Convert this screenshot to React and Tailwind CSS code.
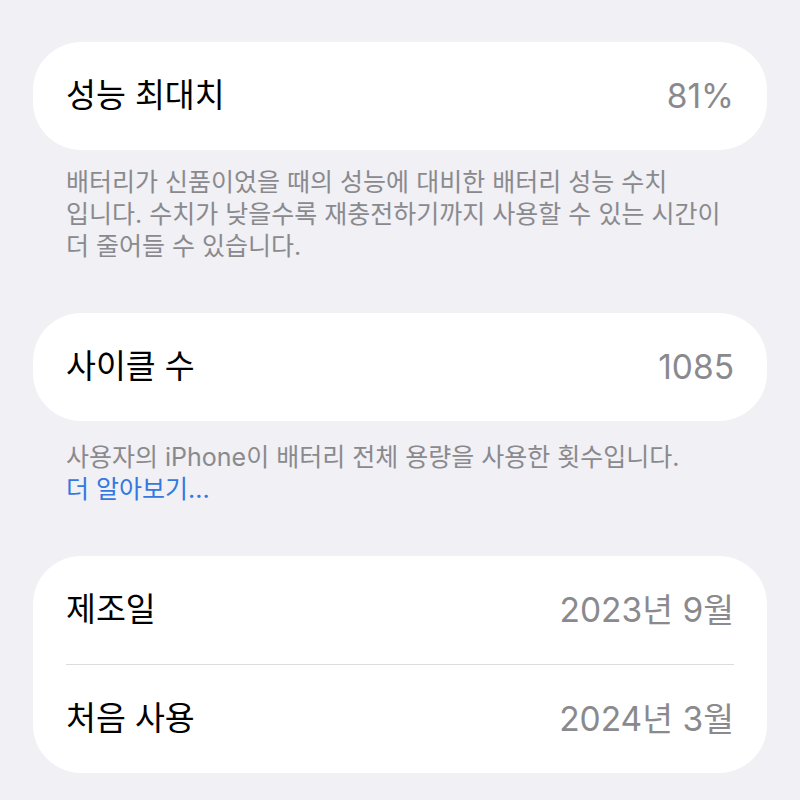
const rows = [
  { label: "제조일", value: "2023년 9월" },
  { label: "처음 사용", value: "2024년 3월" },
];

function Row({ label, value }) {
  return (
    <div className="h-[108px] flex items-center justify-between px-[33px]">
      <span className="text-[32.5px] text-black">{label}</span>
      <span className="text-[33.5px] text-[#8a8a8e]">{value}</span>
    </div>
  );
}

export default function App() {
  return (
    <div
      className="w-[800px] h-[800px] bg-[#f0f0f5] overflow-hidden pt-[42px] px-[33px]"
      style={{ fontFamily: 'Inter, "Noto Sans CJK KR", sans-serif' }}
    >
      <div className="bg-white rounded-[48px]">
        <Row label="성능 최대치" value="81%" />
      </div>

      <p className="mt-[16px] px-[33px] text-[25px] leading-[32px] text-[#8a8a8e] whitespace-nowrap">
        배터리가 신품이었을 때의 성능에 대비한 배터리 성능 수치
        <br />
        입니다. 수치가 낮을수록 재충전하기까지 사용할 수 있는 시간이
        <br />
        더 줄어들 수 있습니다.
      </p>

      <div className="mt-[51px] bg-white rounded-[48px]">
        <Row label="사이클 수" value="1085" />
      </div>

      <p className="mt-[20px] px-[33px] text-[25px] leading-[32px] text-[#8a8a8e] whitespace-nowrap">
        사용자의 iPhone이 배터리 전체 용량을 사용한 횟수입니다.
        <br />
        <span className="text-[#3478e0]">더 알아보기...</span>
      </p>

      <div className="mt-[51px] bg-white rounded-[48px]">
        <Row {...rows[0]} />
        <div className="mx-[33px] h-px bg-[#dcdce0]" />
        <Row {...rows[1]} />
      </div>
    </div>
  );
}
